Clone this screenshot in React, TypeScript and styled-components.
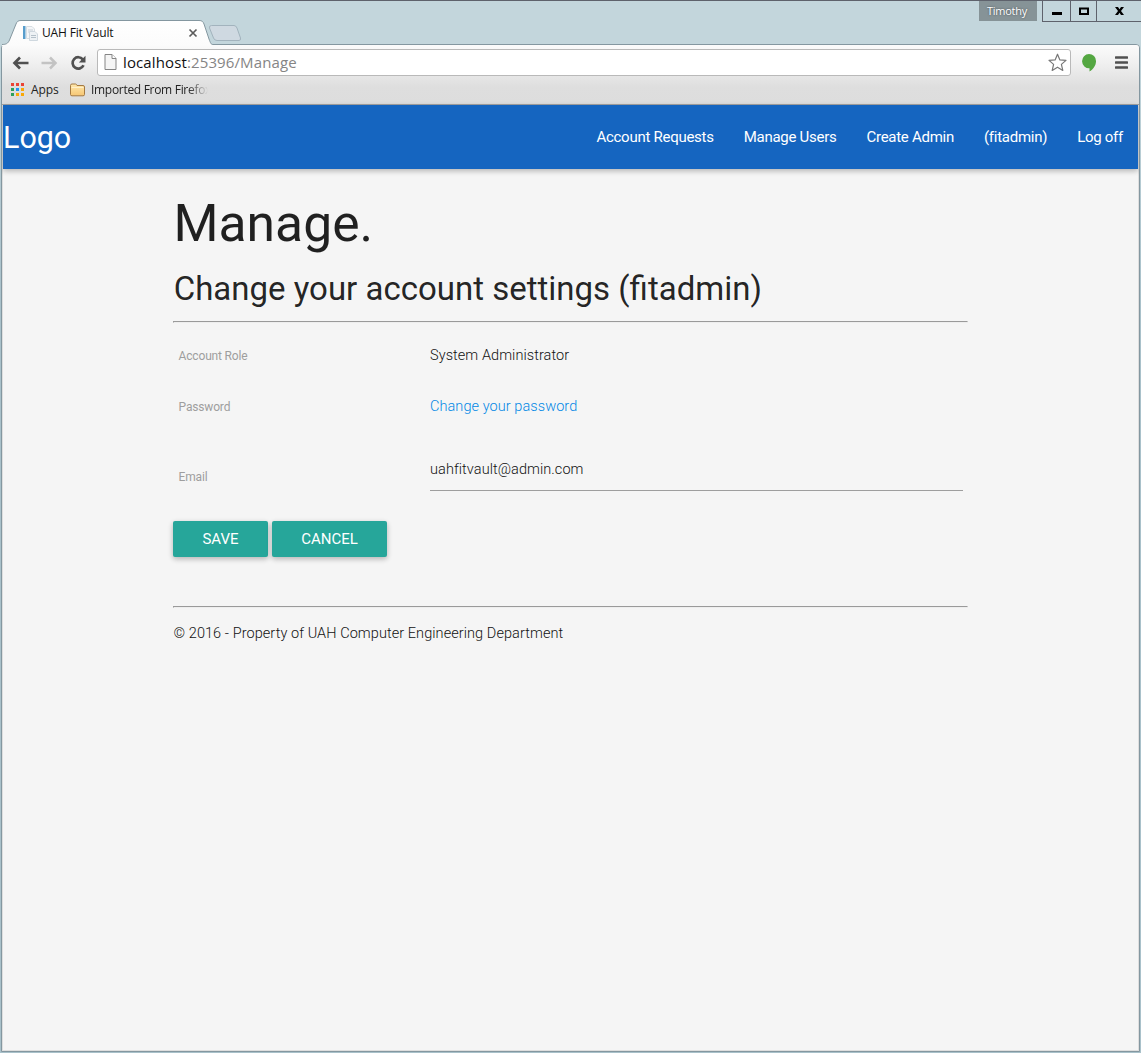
import React from 'react';
import styled, { createGlobalStyle } from 'styled-components';

const uiFont = `'Open Sans', 'Noto Sans', sans-serif`;
const pageFont = `Roboto, 'Liberation Sans', sans-serif`;

const GlobalStyle = createGlobalStyle`
  *, *::before, *::after { box-sizing: border-box; }
  html, body { margin: 0; padding: 0; background: #c3d6dc; }
`;

const Desktop = styled.div`
  display: flex;
  flex-direction: column;
  width: 1141px;
  height: 1053px;
  overflow: hidden;
  background: linear-gradient(#c3d6dc 0, #c3d6dc 44px, #a9c1ca 300px, #a9c1ca 100%);
  border-top: 1px solid #5e626c;
`;

const TitleBar = styled.header`
  position: relative;
  z-index: 1;
  display: flex;
  justify-content: space-between;
  align-items: flex-start;
  height: 43px;
  flex: none;
`;

const TabStrip = styled.div`
  display: flex;
  align-items: flex-start;
  padding: 19px 0 0 2px;
`;

const Tab = styled.div`
  position: relative;
  display: flex;
  align-items: center;
  width: 206px;
  height: 25px;
  padding: 1px 10px 0 20px;
`;

const TabShape = styled.svg`
  position: absolute;
  left: 0;
  top: 0;
  display: block;
`;

const Favicon = styled.svg`
  position: relative;
  flex: none;
`;

const TabTitle = styled.span`
  position: relative;
  flex: 1;
  margin-left: 4px;
  font: 400 12px/16px ${uiFont};
  letter-spacing: -0.15px;
  color: #111;
`;

const TabClose = styled.svg`
  position: relative;
  flex: none;
`;

const NewTab = styled.svg`
  margin: 5px 0 0 0;
  display: block;
`;

const WindowControls = styled.div`
  display: flex;
  align-items: flex-start;
`;

const UserBadge = styled.div`
  width: 58px;
  height: 20px;
  margin-right: 5px;
  background: #869397;
  color: #fff;
  font: 500 11px/20px ${uiFont};
  letter-spacing: -0.25px;
  text-align: center;
  text-indent: -2px;
  text-shadow: 0 0 2px #40484b;
`;

const ControlButton = styled.div<{ $width: number }>`
  display: flex;
  align-items: center;
  justify-content: center;
  width: ${(p) => p.$width}px;
  height: 21px;
  border-left: 1px solid #5e626c;
  border-bottom: 1px solid #5e626c;
`;

const Window = styled.div`
  display: flex;
  flex-direction: column;
  flex: 1;
  min-height: 0;
  margin: 0 1px 1px 1px;
  border: 1px solid #8497a0;
  border-radius: 4px 4px 0 0;
  background: #dedede;
  overflow: hidden;
  padding: 0 0 1px 1px;
`;

const Chrome = styled.div`
  flex: none;
  height: 60px;
  margin-left: -1px;
  border-bottom: 1px solid #a3a3a3;
  background: linear-gradient(#fbfbfb, #f0f0f0 18px, #dedede 42px, #dddddd);
`;

const Toolbar = styled.div`
  display: flex;
  align-items: center;
  height: 34px;
  padding: 0 8px 0 9px;
`;

const ToolIcon = styled.svg<{ $gap?: number; $drop?: number }>`
  display: block;
  flex: none;
  margin: ${(p) => p.$drop ?? 0}px ${(p) => p.$gap ?? 0}px 0 0;
`;

const AddressBar = styled.div`
  display: flex;
  align-items: center;
  width: 974px;
  height: 27px;
  margin-right: 10px;
  padding: 0 3px 0 6px;
  background: #fff;
  border: 1px solid #b9b9b9;
  border-radius: 3px;
`;

const Url = styled.div`
  flex: 1;
  margin-left: 6px;
  font: 400 15px/24px ${uiFont};
  letter-spacing: 0.12px;
  color: #858585;
  b { font-weight: 400; color: #111; }
`;

const Bookmarks = styled.div`
  display: flex;
  align-items: center;
  height: 21px;
  padding-left: 8px;
  font: 400 12px/18px ${uiFont};
  color: #222;
`;

const Bookmark = styled.div<{ $fade?: boolean }>`
  display: flex;
  align-items: center;
  gap: 6px;
  width: ${(p) => (p.$fade ? '144px' : '60px')};
  white-space: nowrap;
  letter-spacing: ${(p) => (p.$fade ? '-0.3px' : '-0.1px')};
  svg { flex: none; }
  ${(p) => p.$fade && 'mask-image: linear-gradient(90deg, #000 118px, transparent 138px);'}
`;

const Page = styled.div`
  flex: 1;
  min-height: 0;
  width: 1135px;
  background: #f5f5f5;
  font-family: ${pageFont};
  color: rgba(0, 0, 0, 0.87);
`;

const Nav = styled.nav`
  display: flex;
  align-items: center;
  justify-content: space-between;
  height: 64px;
  background: #1565c0;
  color: #fff;
  box-shadow: 0 2px 5px 0 rgba(0, 0, 0, 0.16), 0 2px 6px 0 rgba(0, 0, 0, 0.12);
`;

const Brand = styled.a`
  padding-top: 1px;
  font-size: 30.45px;
  line-height: 64px;
`;

const NavLinks = styled.ul`
  display: flex;
  margin: 0;
  padding: 0;
  list-style: none;
`;

const NavLink = styled.li`
  padding: 0 15px;
  font-size: 15px;
  letter-spacing: -0.27px;
  line-height: 64px;
  white-space: nowrap;
`;

const Container = styled.main`
  width: 795px;
  margin-left: 170px;
  padding-top: 26px;
`;

const Title = styled.h1`
  margin: 0;
  padding-left: 0.5px;
  font-size: 51.6px;
  line-height: 58px;
  font-weight: 400;
`;

const Subtitle = styled.h2`
  margin: 16px 0 12px;
  padding-left: 0.7px;
  font-size: 33px;
  line-height: 40px;
  font-weight: 400;
  white-space: nowrap;
`;

const Rule = styled.hr`
  height: 2px;
  margin: 0;
  border: 1px solid;
  border-color: #9a9a9a #eee #eee #9a9a9a;
`;

const Row = styled.div<{ $height: number }>`
  display: grid;
  grid-template-columns: 251px 1fr;
  height: ${(p) => p.$height}px;
  padding: 0 5px;
`;

const Label = styled.label<{ $top: number }>`
  padding: ${(p) => p.$top}px 0 0 0.6px;
  font-size: 12px;
  letter-spacing: -0.17px;
  line-height: 18px;
  color: #9e9e9e;
`;

const Value = styled.div<{ $top: number }>`
  padding: ${(p) => p.$top}px 0 0 1px;
  font-size: 14.5px;
  line-height: 22px;
  font-weight: 300;
  letter-spacing: 0.07px;
  color: #111;
`;

const Link = styled.a`
  color: #0388e5;
`;

const Field = styled.div`
  height: 42px;
  padding-top: 10px;
  border-bottom: 1px solid #9e9e9e;
`;

const Actions = styled.div`
  display: flex;
  gap: 4px;
  margin: 0 0 49px;
`;

const Button = styled.button<{ $width: number }>`
  width: ${(p) => p.$width}px;
  height: 36px;
  padding: 1px 0 0;
  border: 0;
  border-radius: 2px;
  background: #26a69a;
  color: #fff;
  font: 400 15px/35px ${pageFont};
  text-transform: uppercase;
  box-shadow: 0 2px 5px 0 rgba(0, 0, 0, 0.16), 0 2px 6px 0 rgba(0, 0, 0, 0.12);
`;

const Copyright = styled.footer`
  padding: 15px 0 0 0.5px;
  font-size: 14.5px;
  line-height: 22px;
  font-weight: 300;
  letter-spacing: 0.07px;
  color: #111;
`;

const appColors = ['#ea4335', '#ea4335', '#ea4335', '#2da05a', '#2196f3', '#f9a806', '#2da05a', '#f9a806', '#f9a806'];

const navItems = ['Account Requests', 'Manage Users', 'Create Admin', '(fitadmin)', 'Log off'];

export default function App() {
  return (
    <>
      <GlobalStyle />
      <Desktop>
        <TitleBar>
          <TabStrip>
            <Tab>
              <TabShape width="211" height="26" viewBox="0 0 211 26">
                <defs>
                  <linearGradient id="tab" x1="0" y1="0" x2="0" y2="1">
                    <stop offset="0" stopColor="#fff" />
                    <stop offset="1" stopColor="#fbfbfb" />
                  </linearGradient>
                </defs>
                <path d="M0 26V24.5C4 24.5 6 23.5 7.500 20L14 4C15 1.500 16 .5 19 .5H197C200 .5 201 1.500 202 4L207 19C208.500 23 209 24.500 211 24.500V26Z" fill="url(#tab)" />
                <path d="M0 24.5C4 24.5 6 23.5 7.500 20L14 4C15 1.500 16 .5 19 .5H197C200 .5 201 1.500 202 4L207 19C208.500 23 209 24.500 211 24.500" fill="none" stroke="#8497a0" />
              </TabShape>
              <Favicon width="16" height="16" viewBox="0 0 16 16">
                <path d="M4.500 1.500H10L12.500 4V13.500H4.500Z" fill="#f4f6f8" stroke="#d6dde2" />
                <path d="M1 1H3.500V14H1Z" fill="#579dcc" />
                <path d="M6 5H11M6 7H10" stroke="#c5ced6" />
                <path d="M7.500 6.500H13L15.500 9V15.500H7.500Z" fill="#eef2f5" stroke="#cfd8df" />
                <path d="M9 10.500H14M9 12.500H14" stroke="#b5c1ca" />
              </Favicon>
              <TabTitle>UAH Fit Vault</TabTitle>
              <TabClose width="10" height="10" viewBox="0 0 10 10">
                <path d="M1.500 1.500L8.500 8.500M8.500 1.500L1.500 8.500" stroke="#5c5c5c" strokeWidth="1.7" />
              </TabClose>
            </Tab>
            <NewTab width="34" height="17" viewBox="0 0 34 17">
              <path d="M3.500 .5H26Q28 .5 29 3L32.500 13Q33 15.500 31 15.500H9Q6.500 15.500 5.500 13L1.500 3Q1 .5 3.500 .5Z" fill="#cfd9e1" stroke="#a2b3bd" />
            </NewTab>
          </TabStrip>
          <WindowControls>
            <UserBadge>Timothy</UserBadge>
            <ControlButton $width={28}>
              <svg width="10" height="10" viewBox="0 0 10 10"><path d="M0 6H10V9H0Z" /></svg>
            </ControlButton>
            <ControlButton $width={26}>
              <svg width="10" height="8" viewBox="0 0 10 8"><path d="M1 1.500H9V7H1Z" fill="none" stroke="#000" strokeWidth="2" /></svg>
            </ControlButton>
            <ControlButton $width={45}>
              <svg width="9" height="8" viewBox="0 0 9 8"><path d="M0 0H3L4.500 2.300L6 0H9L6 4L9 8H6L4.500 5.700L3 8H0L3 4Z" /></svg>
            </ControlButton>
          </WindowControls>
        </TitleBar>
        <Window>
          <Chrome>
            <Toolbar>
              <ToolIcon width="18" height="16" viewBox="0 0 18 16" $gap={11} $drop={1}>
                <path d="M17.500 8H4M9 2.500L3.500 8L9 13.500" fill="none" stroke="#505050" strokeWidth="2.700" />
              </ToolIcon>
              <ToolIcon width="18" height="16" viewBox="0 0 18 16" $gap={12} $drop={1}>
                <path d="M1.500 8H15M10 2.500L15.500 8L10 13.500" fill="none" stroke="#c3c3c3" strokeWidth="2.500" />
              </ToolIcon>
              <ToolIcon width="17" height="16" viewBox="0 0 17 16" $gap={10} $drop={1}>
                <path d="M12.800 4.400A5.700 5.700 0 1 0 13.500 10.300" fill="none" stroke="#505050" strokeWidth="2.700" />
                <path d="M15.500 .8V7.500H8.800Z" fill="#505050" />
              </ToolIcon>
              <AddressBar>
                <svg width="13" height="16" viewBox="0 0 13 16">
                  <path d="M1 .5H8L12 4.500V15.500H1Z" fill="#f5f5f5" stroke="#858585" />
                  <path d="M8 .5V4.500H12" fill="#fff" stroke="#858585" />
                </svg>
                <Url><b>localhost</b>:25396/Manage</Url>
                <svg width="19" height="19" viewBox="0 0 19 19">
                  <path d="M9.500 1.200L11.900 6.900L18 7.400L13.400 11.400L14.800 17.400L9.500 14.200L4.200 17.400L5.600 11.400L1 7.400L7.100 6.900Z" fill="#fff" stroke="#777" strokeWidth="1.200" strokeLinejoin="round" />
                </svg>
              </AddressBar>
              <ToolIcon width="16" height="18" viewBox="0 0 16 18" $gap={18} $drop={2}>
                <path d="M8 0A7 7 0 0 1 15 7.200C15 11.500 12 15.500 8.500 17.500V14.300A7.150 7.150 0 1 1 8 0Z" fill="#54a742" />
              </ToolIcon>
              <ToolIcon width="13" height="13" viewBox="0 0 13 13">
                <path d="M1 1.500H12M1 6.500H12M1 11.500H12" stroke="#505050" strokeWidth="2.700" strokeLinecap="round" />
              </ToolIcon>
            </Toolbar>
            <Bookmarks>
              <Bookmark>
                <svg width="15" height="14" viewBox="0 0 15 14">
                  {appColors.map((color, i) => (
                    <rect key={i} x={(i % 3) * 5 + 1} y={Math.floor(i / 3) * 5} width="3" height="3" fill={color} />
                  ))}
                </svg>
                Apps
              </Bookmark>
              <Bookmark $fade>
                <svg width="15" height="14" viewBox="0 0 15 14">
                  <defs>
                    <linearGradient id="folder" x1="0" y1="0" x2="0" y2="1">
                      <stop offset="0" stopColor="#ffe8ac" />
                      <stop offset="1" stopColor="#f6c673" />
                    </linearGradient>
                  </defs>
                  <path d="M.5 11.500V2.500Q.5 1 2 1H5.500Q6.500 1 7 2.500H13Q14.500 2.500 14.500 4V11.500Q14.500 12.800 13 12.800H2Q.5 12.800 .5 11.500Z" fill="url(#folder)" stroke="#a47a42" />
                  <path d="M1.500 4.500H13.500" stroke="#fff0c9" />
                </svg>
                Imported From Firefox
              </Bookmark>
            </Bookmarks>
          </Chrome>
          <Page>
            <Nav>
              <Brand>Logo</Brand>
              <NavLinks>
                {navItems.map((item) => <NavLink key={item}>{item}</NavLink>)}
              </NavLinks>
            </Nav>
            <Container>
              <Title>Manage.</Title>
              <Subtitle>Change your account settings (fitadmin)</Subtitle>
              <Rule />
              <Row $height={51}>
                <Label $top={24}>Account Role</Label>
                <Value $top={22}>System Administrator</Value>
              </Row>
              <Row $height={51}>
                <Label $top={24}>Password</Label>
                <Value $top={22}><Link>Change your password</Link></Value>
              </Row>
              <Row $height={96}>
                <Label $top={43}>Email</Label>
                <Value $top={24}><Field>uahfitvault@admin.com</Field></Value>
              </Row>
              <Actions>
                <Button $width={95}>Save</Button>
                <Button $width={115}>Cancel</Button>
              </Actions>
              <Rule />
              <Copyright>© 2016 - Property of UAH Computer Engineering Department</Copyright>
            </Container>
          </Page>
        </Window>
      </Desktop>
    </>
  );
}
